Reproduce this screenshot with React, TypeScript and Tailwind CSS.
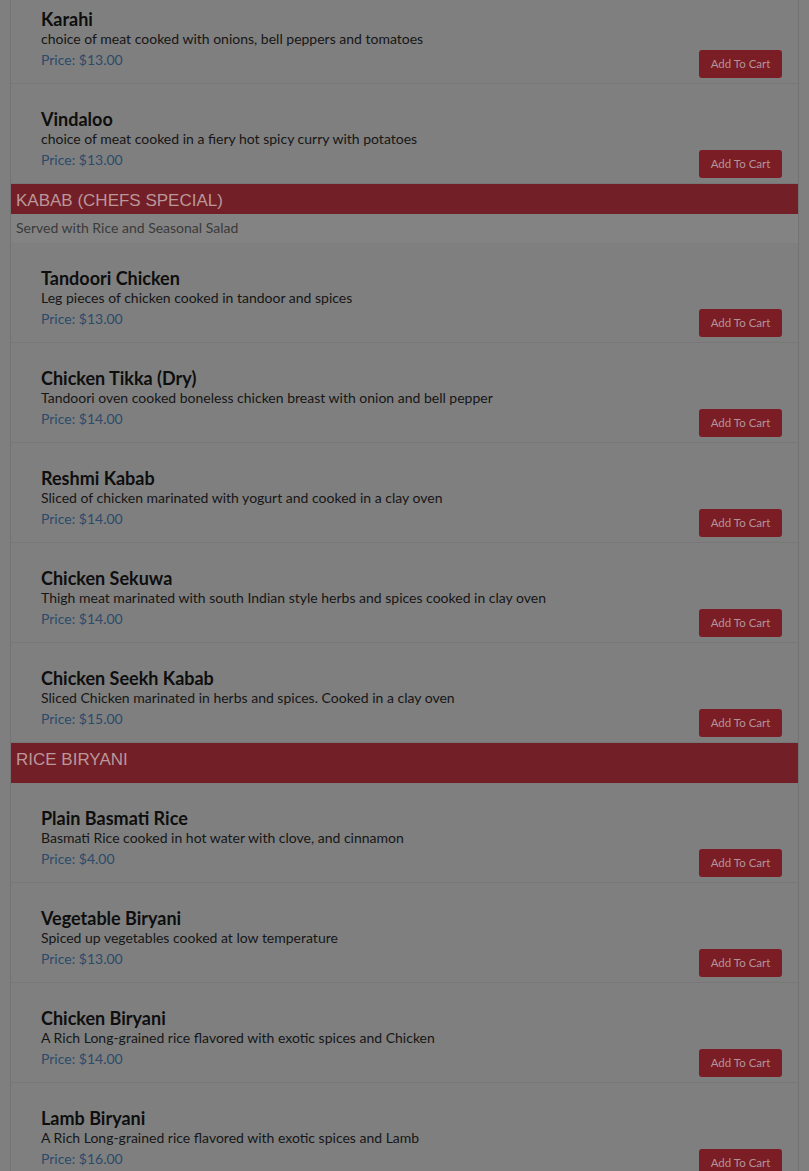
const SECTIONS = [
  {
    title: null as string | null,
    note: "",
    items: [
      { name: "Karahi", desc: "choice of meat cooked with onions, bell peppers and tomatoes", price: "$13.00" },
      { name: "Vindaloo", desc: "choice of meat cooked in a fiery hot spicy curry with potatoes", price: "$13.00" },
    ],
  },
  {
    title: "KABAB (CHEFS SPECIAL)",
    note: "Served with Rice and Seasonal Salad",
    items: [
      { name: "Tandoori Chicken", desc: "Leg pieces of chicken cooked in tandoor and spices", price: "$13.00" },
      { name: "Chicken Tikka (Dry)", desc: "Tandoori oven cooked boneless chicken breast with onion and bell pepper", price: "$14.00" },
      { name: "Reshmi Kabab", desc: "Sliced of chicken marinated with yogurt and cooked in a clay oven", price: "$14.00" },
      { name: "Chicken Sekuwa", desc: "Thigh meat marinated with south Indian style herbs and spices cooked in clay oven", price: "$14.00" },
      { name: "Chicken Seekh Kabab", desc: "Sliced Chicken marinated in herbs and spices. Cooked in a clay oven", price: "$15.00" },
    ],
  },
  {
    title: "RICE BIRYANI",
    note: "",
    items: [
      { name: "Plain Basmati Rice", desc: "Basmati Rice cooked in hot water with clove, and cinnamon", price: "$4.00" },
      { name: "Vegetable Biryani", desc: "Spiced up vegetables cooked at low temperature", price: "$13.00" },
      { name: "Chicken Biryani", desc: "A Rich Long-grained rice flavored with exotic spices and Chicken", price: "$14.00" },
      { name: "Lamb Biryani", desc: "A Rich Long-grained rice flavored with exotic spices and Lamb", price: "$16.00" },
    ],
  },
];

function MenuItem({ name, desc, price }: { name: string; desc: string; price: string }) {
  return (
    <div className="flex h-[100px] items-end justify-between border-b border-[#777777] pl-[30px] pr-[16px] pb-[5px]">
      <div className="flex flex-col pb-[9px]">
        <h3 className="text-[18px] font-bold leading-[22px] text-[#0e0e0e]">{name}</h3>
        <p className="text-[14px] leading-[18px] text-[#161616]">{desc}</p>
        <span className="mt-[3px] text-[14px] leading-[18px] text-[#2c4a6a]">Price: {price}</span>
      </div>
      <button className="h-[28px] w-[83px] rounded-[3px] bg-[#7a1d25] text-[11.5px] text-[#b39597]">
        Add To Cart
      </button>
    </div>
  );
}

export default function App() {
  return (
    <div className="min-h-screen overflow-hidden bg-[#7f7f7f] font-['Lato',sans-serif]">
      <div className="mx-[10px] mt-[-16px] border-x border-[#737373] bg-[#7f7f7f]">
        {SECTIONS.map((section, i) => (
          <div key={i}>
            {section.title && (
              <div className="bg-[#731f27]">
                <h2
                  className={`px-[5px] pt-[4px] font-['Liberation_Sans',sans-serif] text-[17px] leading-[26px] text-[#b9979a] ${
                    section.note ? "" : "pb-[10px]"
                  }`}
                >
                  {section.title}
                </h2>
                {section.note && (
                  <p className="h-[29px] bg-[#838383] px-[5px] text-[14px] leading-[28px] text-[#3a3a3a]">
                    {section.note}
                  </p>
                )}
              </div>
            )}
            {section.items.map((item) => (
              <MenuItem key={item.name} {...item} />
            ))}
          </div>
        ))}
      </div>
    </div>
  );
}
